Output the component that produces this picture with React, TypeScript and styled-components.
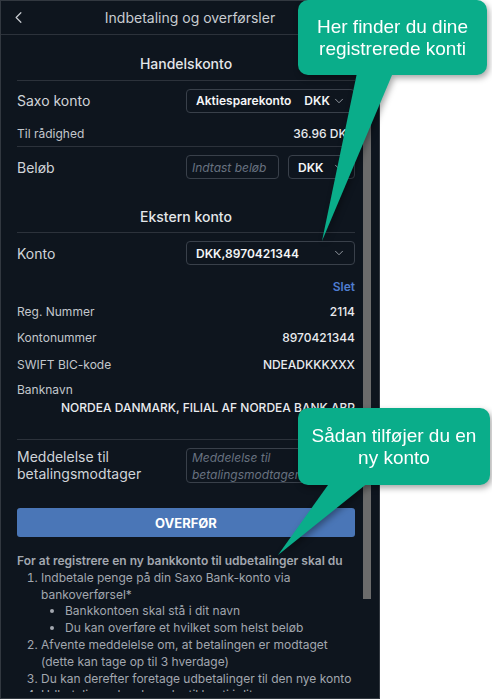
import React from 'react'
import styled, { createGlobalStyle } from 'styled-components'
import { ChevronDown, ChevronLeft } from 'lucide-react'

const GlobalStyle = createGlobalStyle`
  html, body {
    margin: 0;
    padding: 0;
    background: #ffffff;
  }
  * {
    box-sizing: border-box;
  }
`

const Page = styled.div`
  position: relative;
  width: 492px;
  height: 700px;
  overflow: hidden;
  font-family: Inter, 'Noto Sans', sans-serif;
`

const Panel = styled.div`
  width: 380px;
  height: 699px;
  border: 1px solid #323840;
  background: #0e151e;
  display: flex;
  flex-direction: column;
  overflow: hidden;
`

const Header = styled.div`
  height: 34px;
  flex-shrink: 0;
  display: flex;
  align-items: center;
  justify-content: center;
  position: relative;
  border-bottom: 1px solid #2c323b;
  color: #c8ccd1;
  font-size: 14px;
`

const BackButton = styled.span`
  position: absolute;
  left: 8px;
  top: 7px;
  display: flex;
  color: #c8ccd1;
`

const Body = styled.div`
  flex: 1;
  display: flex;
  min-height: 0;
  padding-bottom: 6px;
`

const Content = styled.div`
  flex: 1;
  padding: 0 8px 0 16px;
  overflow: hidden;
`

const Gutter = styled.div`
  width: 16px;
  flex-shrink: 0;
`

const Thumb = styled.div`
  width: 8px;
  height: 562px;
  margin-top: 2px;
  background: #6b6b6b;
`

const SectionTitle = styled.div<{ $top: number }>`
  padding-top: ${({ $top }) => $top}px;
  height: 46px;
  line-height: 18px;
  text-align: center;
  font-size: 14px;
  font-weight: 500;
  color: #e3e6e9;
  border-bottom: 1px solid #2c323b;
`

const Row = styled.div<{ $h: number; $line?: boolean }>`
  height: ${({ $h }) => $h}px;
  display: flex;
  align-items: center;
  justify-content: space-between;
  border-bottom: ${({ $line }) => ($line ? '1px solid #2c323b' : 'none')};
`

const Label = styled.span<{ $big?: boolean }>`
  font-size: ${({ $big }) => ($big ? 14 : 12)}px;
  color: ${({ $big }) => ($big ? '#d0d4d9' : '#c3c7cc')};
  line-height: 17px;
`

const Value = styled.span`
  font-size: 12px;
  font-weight: 500;
  color: #e9ebee;
`

const Select = styled.div<{ $w: number }>`
  width: ${({ $w }) => $w}px;
  height: 24px;
  border: 1px solid #39404a;
  border-radius: 4px;
  padding: 0 8px 0 9px;
  display: flex;
  align-items: center;
  font-size: 12px;
  font-weight: 600;
  color: #f4f5f7;
  white-space: nowrap;
`

const Currency = styled.span`
  margin-left: 13px;
`

const Caret = styled.span`
  margin-left: auto;
  display: flex;
  color: #9aa0a8;
`

const Field = styled.div<{ $w: number; $h: number }>`
  width: ${({ $w }) => $w}px;
  height: ${({ $h }) => $h}px;
  border: 1px solid #39404a;
  border-radius: 4px;
  padding: 0 5px;
  display: flex;
  align-items: center;
  font-size: 12px;
  font-style: italic;
  line-height: 17px;
  color: #687280;
  white-space: nowrap;
  overflow: hidden;
`

const Controls = styled.div`
  display: flex;
  gap: 9px;
`

const LinkRow = styled.div`
  height: 24px;
  margin-top: 1px;
  display: flex;
  align-items: center;
  justify-content: flex-end;
  font-size: 12px;
  font-weight: 600;
  color: #4f7dd0;
`

const BankBlock = styled.div`
  padding-top: 4px;
  height: 63px;
  display: flex;
  flex-direction: column;
  border-bottom: 1px solid #2c323b;
`

const BankName = styled.div`
  margin-top: 1px;
  text-align: right;
  font-size: 12px;
  font-weight: 500;
  line-height: 18px;
  color: #e9ebee;
  white-space: nowrap;
`

const MessageRow = styled.div`
  padding-top: 8px;
  display: flex;
  justify-content: space-between;
  align-items: flex-start;
`

const Submit = styled.button`
  display: block;
  margin-top: 25px;
  height: 29px;
  width: 100%;
  border: none;
  border-radius: 3px;
  background: #4a76b7;
  color: #ffffff;
  font-family: inherit;
  font-size: 13px;
  font-weight: 700;
`

const Help = styled.div`
  margin-top: 16px;
  font-size: 12px;
  line-height: 16.8px;
  color: #a2a7af;
`

const HelpTitle = styled.div`
  font-weight: 600;
`

const Steps = styled.ol`
  margin: 0;
  padding-left: 24px;
`

const Bullets = styled.ul`
  margin: 0;
  padding-left: 24px;
  list-style-type: disc;
`

const Callout = styled.div<{ $x: number; $y: number; $w: number; $h: number }>`
  position: absolute;
  left: ${({ $x }) => $x}px;
  top: ${({ $y }) => $y}px;
  width: ${({ $w }) => $w}px;
  height: ${({ $h }) => $h}px;
  filter: drop-shadow(2px 3px 3px rgba(0, 0, 0, 0.35));
`

const Bubble = styled.div`
  position: relative;
  z-index: 1;
  width: 100%;
  height: 100%;
  border-radius: 10px;
  background: #0aad8a;
  display: flex;
  align-items: center;
  justify-content: center;
  text-align: center;
  font-family: 'Liberation Sans', Arial, sans-serif;
  font-size: 19px;
  line-height: 22px;
  color: #ffffff;
`

const Tail = styled.svg`
  position: absolute;
  left: 0;
  top: 0;
  overflow: visible;
`

function Chevron() {
  return (
    <Caret>
      <ChevronDown size={14} strokeWidth={1.6} />
    </Caret>
  )
}

export default function App() {
  return (
    <Page>
      <GlobalStyle />
      <Panel>
        <Header>
          <BackButton>
            <ChevronLeft size={19} strokeWidth={1.5} />
          </BackButton>
          Indbetaling og overførsler
        </Header>
        <Body>
          <Content>
            <SectionTitle $top={20}>Handelskonto</SectionTitle>
            <Row $h={39}>
              <Label $big>Saxo konto</Label>
              <Select $w={169}>
                Aktiesparekonto
                <Currency>DKK</Currency>
                <Chevron />
              </Select>
            </Row>
            <Row $h={27} $line>
              <Label>Til rådighed</Label>
              <Value>36.96 DKK</Value>
            </Row>
            <Row $h={40}>
              <Label $big>Beløb</Label>
              <Controls>
                <Field $w={93} $h={24}>Indtast beløb</Field>
                <Select $w={67}>
                  DKK
                  <Chevron />
                </Select>
              </Controls>
            </Row>
            <SectionTitle $top={21}>Ekstern konto</SectionTitle>
            <Row $h={40}>
              <Label $big>Konto</Label>
              <Select $w={169}>
                DKK,8970421344
                <Chevron />
              </Select>
            </Row>
            <LinkRow>Slet</LinkRow>
            <Row $h={26}>
              <Label>Reg. Nummer</Label>
              <Value>2114</Value>
            </Row>
            <Row $h={27}>
              <Label>Kontonummer</Label>
              <Value>8970421344</Value>
            </Row>
            <Row $h={26}>
              <Label>SWIFT BIC-kode</Label>
              <Value>NDEADKKKXXX</Value>
            </Row>
            <BankBlock>
              <Label>Banknavn</Label>
              <BankName>NORDEA DANMARK, FILIAL AF NORDEA BANK ABP</BankName>
            </BankBlock>
            <MessageRow>
              <Label $big>
                Meddelelse til
                <br />
                betalingsmodtager
              </Label>
              <Field $w={169} $h={35}>
                Meddelelse til
                <br />
                betalingsmodtager
              </Field>
            </MessageRow>
            <Submit>OVERFØR</Submit>
            <Help>
              <HelpTitle>For at registrere en ny bankkonto til udbetalinger skal du</HelpTitle>
              <Steps>
                <li>
                  Indbetale penge på din Saxo Bank-konto via
                  <br />
                  bankoverførsel*
                  <Bullets>
                    <li>Bankkontoen skal stå i dit navn</li>
                    <li>Du kan overføre et hvilket som helst beløb</li>
                  </Bullets>
                </li>
                <li>
                  Afvente meddelelse om, at betalingen er modtaget
                  <br />
                  (dette kan tage op til 3 hverdage)
                </li>
                <li>Du kan derefter foretage udbetalinger til den nye konto</li>
                <li>Udbetalinger kan kun ske til konti i dit navn</li>
              </Steps>
            </Help>
          </Content>
          <Gutter>
            <Thumb />
          </Gutter>
        </Body>
      </Panel>

      <Callout $x={298} $y={0} $w={189} $h={75}>
        <Tail width={189} height={245}>
          <polygon points="60,68 97,68 24,241" fill="#0aad8a" />
        </Tail>
        <Bubble>
          Her finder du dine
          <br />
          registrerede konti
        </Bubble>
      </Callout>

      <Callout $x={298} $y={408} $w={192} $h={77}>
        <Tail width={192} height={150}>
          <polygon points="35,70 76,70 -20,147" fill="#0aad8a" />
        </Tail>
        <Bubble>
          Sådan tilføjer du en
          <br />
          ny konto
        </Bubble>
      </Callout>
    </Page>
  )
}
